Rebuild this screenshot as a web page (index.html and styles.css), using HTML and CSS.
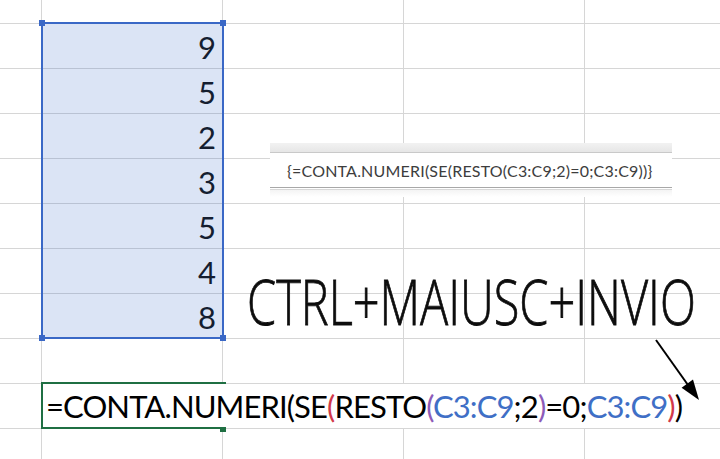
FILE: index.html
```html
<!DOCTYPE html>
<html lang="it">
<head>
<meta charset="utf-8">
<title>CONTA.NUMERI con formula matrice</title>
<link rel="stylesheet" href="styles.css">
</head>
<body>
<div class="sheet">
  <div class="cell"></div><div class="cell"></div><div class="cell"></div><div class="cell"></div><div class="cell"></div>

  <div class="cell"></div><div class="cell num">9</div><div class="cell"></div><div class="cell"></div><div class="cell"></div>
  <div class="cell"></div><div class="cell num">5</div><div class="cell"></div><div class="cell"></div><div class="cell"></div>
  <div class="cell"></div><div class="cell num">2</div><div class="cell"></div><div class="cell"></div><div class="cell"></div>
  <div class="cell"></div><div class="cell num">3</div><div class="cell"></div><div class="cell"></div><div class="cell"></div>
  <div class="cell"></div><div class="cell num">5</div><div class="cell"></div><div class="cell"></div><div class="cell"></div>
  <div class="cell"></div><div class="cell num">4</div><div class="cell"></div><div class="cell"></div><div class="cell"></div>
  <div class="cell"></div><div class="cell num">8</div><div class="cell"></div><div class="cell"></div><div class="cell"></div>

  <div class="cell"></div><div class="cell"></div><div class="cell"></div><div class="cell"></div><div class="cell"></div>

  <div class="cell"></div>
  <div class="cell formula-cell"><span class="formula">=CONTA.NUMERI(SE<span class="p-red">(</span>RESTO<span class="p-purple">(</span><span class="ref">C3:C9</span>;2<span class="p-purple">)</span>=0;<span class="ref">C3:C9</span><span class="p-red">)</span>)</span></div>

  <div class="cell"></div><div class="cell"></div><div class="cell"></div><div class="cell"></div><div class="cell"></div>

  <div class="selection">
    <i class="handle tl"></i><i class="handle tr"></i><i class="handle bl"></i><i class="handle br"></i>
  </div>

  <div class="popup">
    <div class="popup-top"></div>
    <div class="popup-body">{=CONTA.NUMERI(SE(RESTO(C3:C9;2)=0;C3:C9))}</div>
    <div class="popup-bottom"></div>
  </div>

  <div class="shortcut"><span class="shortcut-text">CTRL+MAIUSC+INVIO</span></div>

  <svg class="arrow" width="56" height="72" viewBox="0 0 56 72" aria-hidden="true">
    <line x1="6" y1="6" x2="38" y2="51" stroke="#000" stroke-width="2"/>
    <polygon points="49,66 31.6,53.8 43,45.6" fill="#000"/>
  </svg>
</div>
</body>
</html>
```

FILE: styles.css
```css
* { box-sizing: border-box; }

html, body {
  margin: 0;
  padding: 0;
  background: #ffffff;
}

body {
  width: 720px;
  height: 459px;
  overflow: hidden;
  font-family: "Lato", "Open Sans", sans-serif;
}

.sheet {
  position: relative;
  width: 720px;
  height: 459px;
  display: grid;
  grid-template-columns: 41px 180px 180px 180px 1fr;
  grid-template-rows: 23px repeat(9, 44px) 1fr;
  gap: 1px;
  background: #d6d6d6;
  overflow: hidden;
}

.cell {
  background: #ffffff;
  min-width: 0;
}

.num {
  display: flex;
  justify-content: flex-end;
  align-items: flex-end;
  padding: 0 6px 5px 0;
  font-size: 31px;
  line-height: 1;
  color: #111111;
}

.formula-cell {
  grid-column: span 4;
  position: relative;
  display: flex;
  align-items: center;
  padding-left: 4px;
  overflow: visible;
}

.formula-cell::before {
  content: "";
  position: absolute;
  top: -2px;
  left: -1px;
  bottom: -1px;
  width: 183px;
  border: 2px solid #1f6f43;
  border-right: none;
}

.formula-cell::after {
  content: "";
  position: absolute;
  left: 178px;
  bottom: -4px;
  width: 6px;
  height: 5px;
  background: #1f6f43;
}

.formula {
  white-space: nowrap;
  font-size: 31px;
  letter-spacing: -0.9px;
  line-height: 44px;
  color: #000000;
}

.p-red { color: #d2394a; }
.p-purple { color: #8d5bb8; }
.ref { color: #3f6fc6; }

.selection {
  position: absolute;
  grid-column: 2 / 3;
  grid-row: 2 / 9;
  top: -2px;
  left: -1px;
  right: -2px;
  bottom: -1px;
  border: 2px solid #3a68c6;
  background: rgba(40, 95, 195, 0.17);
}

.handle {
  position: absolute;
  width: 6px;
  height: 6px;
  background: #3a68c6;
}
.handle.tl { left: -4px; top: -4px; }
.handle.tr { right: -4px; top: -4px; }
.handle.bl { left: -4px; bottom: -4px; }
.handle.br { right: -4px; bottom: -4px; }

.popup {
  position: absolute;
  left: 270px;
  top: 143px;
  width: 402px;
  display: flex;
  flex-direction: column;
  background: #ffffff;
}

.popup-top {
  height: 10px;
  background: linear-gradient(#f2f2f2, #e6e6e6);
  border-bottom: 1px solid #c9c9c9;
}

.popup-body {
  height: 35px;
  display: flex;
  align-items: center;
  padding-left: 17px;
  font-size: 16px;
  letter-spacing: 0.2px;
  color: #3d3d3d;
  white-space: nowrap;
  border-bottom: 1px solid #a8a8a8;
}

.popup-bottom {
  height: 8px;
  border-top: 1px solid #d8d8d8;
  margin-top: 1px;
  background: linear-gradient(#f4f4f4, #ffffff);
}

.shortcut {
  position: absolute;
  left: 247px;
  top: 269px;
  font-family: "Open Sans", "Lato", sans-serif;
  font-weight: 300;
  font-size: 63px;
  line-height: 1;
  color: #0d0d0d;
  -webkit-text-stroke: 0.8px #0d0d0d;
  white-space: nowrap;
}

.shortcut-text {
  display: inline-block;
  transform: scaleX(0.745);
  transform-origin: left top;
}

.arrow {
  position: absolute;
  left: 650px;
  top: 334px;
}
```
